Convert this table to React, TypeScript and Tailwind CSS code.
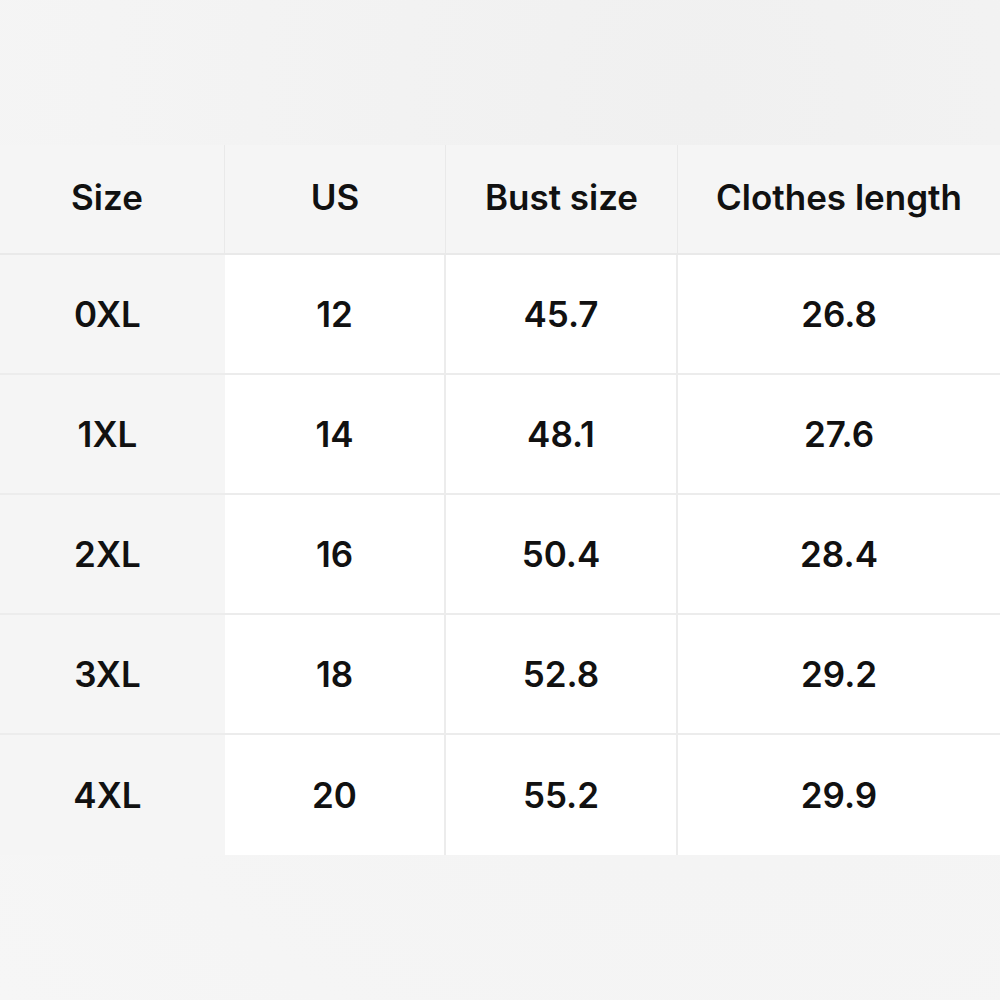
const headers = ["Size", "US", "Bust size", "Clothes length"];

const rows = [
  ["0XL", "12", "45.7", "26.8"],
  ["1XL", "14", "48.1", "27.6"],
  ["2XL", "16", "50.4", "28.4"],
  ["3XL", "18", "52.8", "29.2"],
  ["4XL", "20", "55.2", "29.9"],
];

const App = () => {
  return (
    <div className="h-[1000px] w-[1000px] overflow-hidden bg-[radial-gradient(ellipse_at_70%_10%,#f0f0f0,#f4f4f4_60%,#f6f6f6)] pt-[145px] font-['Inter','Liberation_Sans',sans-serif] text-[#111111]">
      <div className="grid grid-cols-[225px_221px_232px_322px]">
        {/* Header */}
        {headers.map((h, i) => (
          <div
            key={h}
            className={`flex h-[110px] items-center justify-center border-b-2 border-[#e9e9e9] bg-[#f5f5f5] pb-[4px] text-[35px] font-semibold ${
              i < headers.length - 1 ? "border-r" : ""
            } ${i === 0 ? "pr-[10px]" : ""}`}
          >
            {h}
          </div>
        ))}

        {/* Body */}
        {rows.map((row, r) =>
          row.map((cell, c) => (
            <div
              key={`${r}-${c}`}
              className={`flex h-[120px] items-center justify-center text-[35px] font-semibold ${
                r < rows.length - 1 ? "border-b-2 border-[#ececec]" : ""
              } ${c === 0 ? "bg-[#f5f5f5] pr-[10px]" : "bg-white"} ${
                c > 0 && c < row.length - 1 ? "border-r-2 border-[#ececec]" : ""
              }`}
            >
              {cell}
            </div>
          ))
        )}
      </div>
    </div>
  );
};

export default App;
